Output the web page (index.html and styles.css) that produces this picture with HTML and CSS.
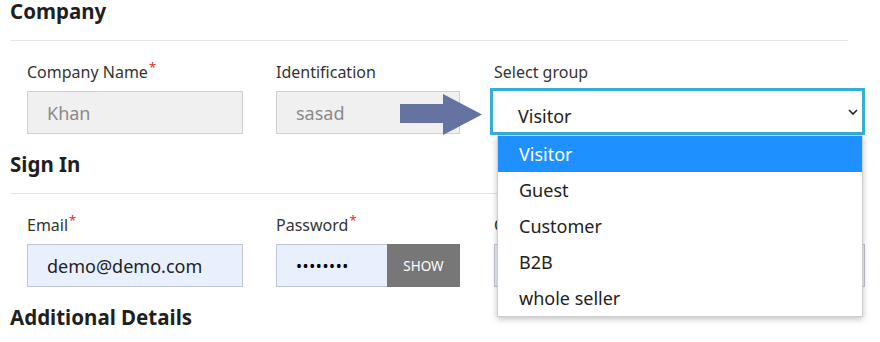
FILE: index.html
```html
<!DOCTYPE html>
<html lang="en">
<head>
  <meta charset="UTF-8" />
  <title>Account</title>
  <link rel="stylesheet" href="styles.css">
</head>
<body>

<section class="block first">
  <h2 class="block-title">Company</h2>
  <div class="fields">
    <div class="field">
      <label>Company Name<span class="req">*</span></label>
      <div class="input disabled">Khan</div>
    </div>
    <div class="field">
      <label>Identification</label>
      <div class="input disabled">sasad</div>
    </div>
    <div class="field group">
      <label>Select group</label>
      <div class="select focused">
        <span class="select-value">Visitor</span>
        <svg class="chevron" width="10" height="6" viewBox="0 0 10 6">
          <path d="M1 1l4 4 4-4" fill="none" stroke="#222" stroke-width="1.6"/>
        </svg>
      </div>
      <ul class="dropdown">
        <li class="active">Visitor</li>
        <li>Guest</li>
        <li>Customer</li>
        <li>B2B</li>
        <li>whole seller</li>
      </ul>
    </div>
    <svg class="pointer" width="82" height="41" viewBox="0 0 82 41">
      <polygon points="0,10 43,10 43,0 82,20.5 43,41 43,29 0,29" fill="#64739f"/>
    </svg>
  </div>
</section>

<section class="block">
  <h2 class="block-title">Sign In</h2>
  <div class="fields">
    <div class="field">
      <label>Email<span class="req">*</span></label>
      <div class="input filled">demo@demo.com</div>
    </div>
    <div class="field">
      <label>Password<span class="req">*</span></label>
      <div class="password">
        <div class="input filled dots">••••••••</div>
        <button class="show-btn">SHOW</button>
      </div>
    </div>
    <div class="field">
      <label>Confirm Password<span class="req">*</span></label>
      <div class="input filled"></div>
    </div>
  </div>
</section>

<section class="block last">
  <h2 class="block-title">Additional Details</h2>
</section>

</body>
</html>
```

FILE: styles.css
```css
* { margin: 0; padding: 0; box-sizing: border-box; }

body {
  font-family: "Noto Sans", "Open Sans", sans-serif;
  background: #fff;
  color: #333;
  overflow: hidden;
}

.block {
  padding: 0 0 0 10px;
  margin-top: 16px;
}

.block.first {
  margin-top: -2px;
}

.block.last {
  margin-top: 17px;
}

.block-title {
  font-size: 20.5px;
  line-height: 26px;
  font-weight: 700;
  color: #1f1f1f;
  padding-bottom: 16px;
  border-bottom: 1px solid #e6e6e6;
  width: 838px;
}

.fields {
  position: relative;
  display: grid;
  grid-template-columns: 216px 184px 372px;
  column-gap: 33px;
  align-items: start;
  padding: 20px 0 0 17px;
}

.fields .field:nth-child(3) {
  margin-left: 1px;
}

.field {
  position: relative;
}

.field label {
  display: block;
  font-size: 16px;
  line-height: 22px;
  color: #333;
  white-space: nowrap;
}

.req {
  color: #e02b27;
  font-size: 13px;
  line-height: 13px;
  vertical-align: top;
  margin-left: 1px;
}

.input {
  margin-top: 8px;
  height: 43px;
  display: flex;
  align-items: center;
  padding: 0 19px;
  font-size: 18px;
  border: 1px solid #c6c6c6;
}

.input.disabled {
  background: #f0f0f0;
  border-color: #d0d0d0;
  color: #8a8a8a;
}

.input.filled {
  background: #e8f0fe;
  border-color: #c0c6cf;
  color: #222;
}

.password {
  display: flex;
}

.password .input {
  width: 111px;
  border-right: none;
}

.input.dots {
  font-size: 16px;
  letter-spacing: 0.6px;
  color: #000;
}

.show-btn {
  margin-top: 8px;
  width: 73px;
  height: 43px;
  border: none;
  background: #777;
  color: #fff;
  font-family: inherit;
  font-size: 13.5px;
}

.select {
  margin: 5px 0 0 -4px;
  width: calc(100% + 4px);
  height: 47px;
  display: flex;
  align-items: center;
  padding: 0 4px 0 25px;
  background: #fff;
  border: 3px solid #36afd6;
  font-size: 18px;
  color: #222;
}

.select-value {
  padding-top: 8px;
}

.chevron {
  margin-left: auto;
}

.dropdown {
  position: absolute;
  z-index: 10;
  top: 100%;
  left: 3px;
  right: 2px;
  list-style: none;
  background: #fff;
  border: 1px solid #cfcfcf;
  box-shadow: 0 2px 6px rgba(0, 0, 0, 0.25);
}

.dropdown li {
  height: 36px;
  line-height: 35px;
  padding: 1px 0 0 21px;
  font-size: 18px;
  color: #222;
}

.dropdown li.active {
  background: #1e90ff;
  color: #fff;
}

.pointer {
  position: absolute;
  left: 390px;
  top: 53px;
}
```
